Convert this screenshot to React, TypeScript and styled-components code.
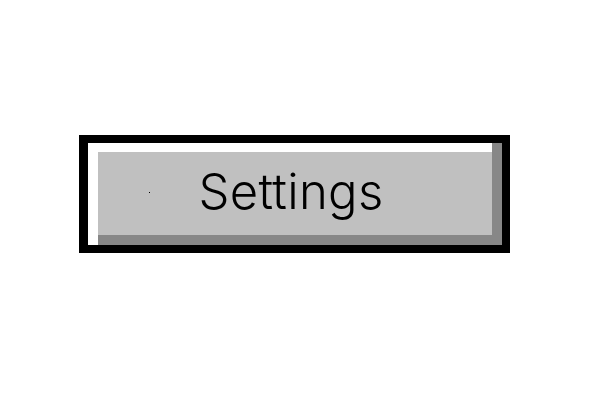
import React from "react";
import styled, { createGlobalStyle } from "styled-components";

const GlobalStyle = createGlobalStyle`
  html, body {
    margin: 0;
    padding: 0;
    background: #ffffff;
  }
`;

const Page = styled.div`
  width: 600px;
  height: 400px;
  box-sizing: border-box;
  padding: 135px 0 0 79px;
  display: flex;
  align-items: flex-start;
`;

const Frame = styled.div`
  width: 431px;
  height: 118px;
  box-sizing: border-box;
  border: 8px solid #000;
  border-left-width: 9px;
  display: flex;
`;

const Bevel = styled.button`
  flex: 1;
  margin: 0;
  padding: 9px 10px 10px 10px;
  border: none;
  background: #c0c0c0;
  box-shadow: inset 10px 0 0 #ffffff, inset -10px -10px 0 #878787,
    inset 0 9px 0 #ffffff;
  display: flex;
  align-items: center;
  justify-content: center;
  position: relative;
  cursor: pointer;
`;

const Label = styled.span`
  font-family: "Inter", "Liberation Sans", sans-serif;
  font-size: 49px;
  font-weight: 360;
  letter-spacing: 0.3px;
  font-variant-ligatures: none;
  color: #000;
  line-height: 1;
  margin: -5px 8px 0 0;
`;

const Speck = styled.span`
  position: absolute;
  left: 61px;
  top: 49px;
  width: 1px;
  height: 1px;
  background: #000;
`;

export default function App() {
  return (
    <>
      <GlobalStyle />
      <Page>
        <Frame>
          <Bevel>
            <Speck />
            <Label>Settings</Label>
          </Bevel>
        </Frame>
      </Page>
    </>
  );
}
